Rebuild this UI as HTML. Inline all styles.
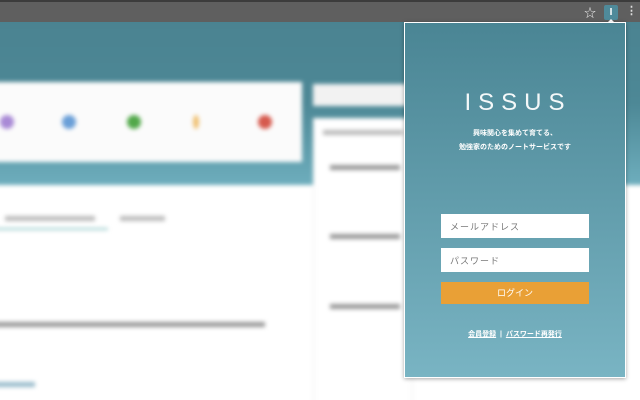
<!DOCTYPE html>
<html><head><meta charset="utf-8"><style>
*{margin:0;padding:0;box-sizing:border-box}
body{width:640px;height:400px;overflow:hidden;position:relative;background:#fff;font-family:"Liberation Sans","Noto Sans CJK JP",sans-serif}
.bar{position:absolute;left:0;top:0;width:640px;height:22px;background:#5f5f5f;border-top:2px solid #3c3c3c;z-index:2}
.clip{position:absolute;left:0;top:22px;width:640px;height:378px;overflow:hidden}
.page{position:absolute;left:0;top:0;width:640px;height:378px;filter:blur(2px)}
.hdr{position:absolute;left:-20px;top:-20px;width:680px;height:183px;background:linear-gradient(#4a8290,#4d8896 55%,#6eaebd)}
.card{position:absolute;background:#fbfbfb}
.dot{position:absolute;width:14px;height:14px;border-radius:50%}
.g{position:absolute;background:#bbb;height:5px}
.pop{position:absolute;left:404px;top:22px;width:222px;height:356px;background:linear-gradient(#4a8594,#79b4c3);border:1px solid #fff;box-shadow:0 1px 4px rgba(0,0,0,.35);z-index:3}
.t{position:absolute;left:0;width:100%;text-align:center;color:#fff}
.in{position:absolute;left:36px;width:148px;height:24px;background:#fff;color:#777;font-size:9px;padding:6px 0 0 9px;letter-spacing:1px}
</style></head><body>
<div class="bar">
<span style="position:absolute;left:584px;top:2px;color:#eee;font-size:12px">☆</span>
<div style="position:absolute;left:604px;top:3px;width:14px;height:15px;background:#4f8a9a;border-radius:2px;color:#fff;font-size:10px;text-align:center;line-height:15px;font-weight:bold">I</div>
<span style="position:absolute;left:626px;top:2px;color:#ddd;font-size:11px;font-weight:bold">⋮</span>
<div style="position:absolute;left:607px;top:17px;width:0;height:0;border-left:4px solid transparent;border-right:4px solid transparent;border-bottom:4px solid #fff"></div>
</div>
<div class="clip"><div class="page">
<div class="hdr"></div>
<div class="card" style="left:-10px;top:60px;width:312px;height:80px"></div>
<div class="dot" style="left:0;top:93px;background:#a98ad6"></div>
<div class="dot" style="left:62px;top:93px;background:#6a9fd8"></div>
<div class="dot" style="left:127px;top:93px;background:#52a84a"></div>
<div class="dot" style="left:193px;top:93px;width:6px;background:#f0c070"></div>
<div class="dot" style="left:258px;top:93px;background:#d65a4e"></div>
<div class="card" style="left:313px;top:62px;width:100px;height:22px;background:#f2f2f2"></div>
<div class="card" style="left:313px;top:96px;width:100px;height:290px;background:#fff;border:1px solid #eee"></div>
<div class="g" style="left:323px;top:108px;width:80px"></div>
<div class="g" style="left:330px;top:143px;width:70px;background:#999"></div>
<div class="g" style="left:330px;top:212px;width:70px;background:#999"></div>
<div class="g" style="left:330px;top:282px;width:70px;background:#999"></div>
<div class="g" style="left:5px;top:194px;width:90px"></div>
<div class="g" style="left:120px;top:194px;width:45px"></div>
<div style="position:absolute;left:-10px;top:206px;width:118px;height:2px;background:#9cc"></div>
<div class="g" style="left:-10px;top:300px;width:275px;background:#999"></div>
<div class="g" style="left:-10px;top:360px;width:45px;background:#9bc"></div>
</div></div>
<div class="pop">
<div class="t" style="top:66px;font-size:24px;letter-spacing:7px;padding-left:6px;color:#f4f8f9">ISSUS</div>
<div class="t" style="top:105px;font-size:7px;font-weight:bold">興味関心を集めて育てる、</div>
<div class="t" style="top:119px;font-size:7px;font-weight:bold">勉強家のためのノートサービスです</div>
<div class="in" style="top:191px">メールアドレス</div>
<div class="in" style="top:225px">パスワード</div>
<div style="position:absolute;left:36px;top:259px;width:148px;height:22px;background:#e9a036;color:#fff;font-size:9px;text-align:center;line-height:22px">ログイン</div>
<div class="t" style="top:306px;font-size:7px;font-weight:bold"><u>会員登録</u>&nbsp;&nbsp;|&nbsp;&nbsp;<u>パスワード再発行</u></div>
</div>
</body></html>
